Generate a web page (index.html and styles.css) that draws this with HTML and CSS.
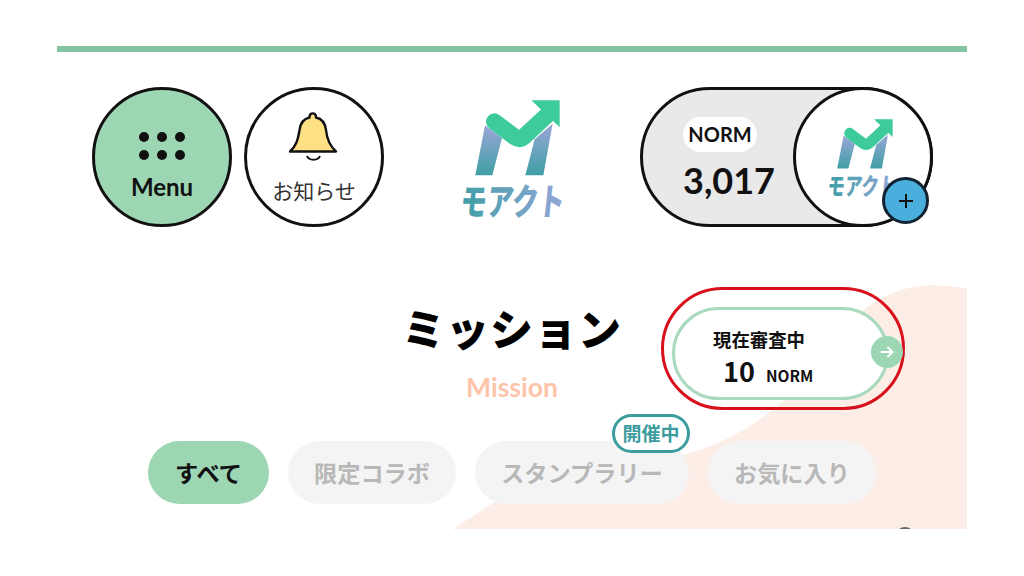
FILE: index.html
```html
<!DOCTYPE html>
<html lang="ja">
<head>
<meta charset="utf-8">
<title>ミッション</title>
<link rel="stylesheet" href="styles.css">
</head>
<body>
<svg class="defs" width="0" height="0" aria-hidden="true">
  <defs>
    <linearGradient id="legL" x1="0" y1="0" x2="0" y2="1">
      <stop offset="0" stop-color="#9aa6d6"/><stop offset="1" stop-color="#3f9fa6"/>
    </linearGradient>
    <linearGradient id="wordG" x1="0" y1="0" x2="1" y2="0">
      <stop offset="0" stop-color="#3f9fa6"/><stop offset="1" stop-color="#94a6d8"/>
    </linearGradient>
    <symbol id="logo" viewBox="0 0 420 450">
      <path d="M135 130 L186 168 L157 280 L106 280 Z" fill="url(#legL)"/>
      <path d="M338 125 L310 280 L256 280 L284 172 Z" fill="url(#legL)"/>
      <path d="M163 119 L224 165 Q238 175 252 164 L325 96" fill="none" stroke="#3ecb9c" stroke-width="50" stroke-linecap="round" stroke-linejoin="round"/>
      <path d="M274 55 L359 55 L359 136 Z" fill="#3ecb9c"/>
      <text class="logo-word" x="60" y="399" textLength="312" lengthAdjust="spacingAndGlyphs" fill="url(#wordG)" transform="translate(40 0) skewX(-6)">モアクト</text>
    </symbol>
  </defs>
</svg>
<main class="frame">
  <svg class="blob" viewBox="57 46 910 483" aria-hidden="true">
    <path d="M453 529 L493 503 C560 465 640 468 690 453 C740 438 790 405 820 360 C850 315 880 287 933 285 L967 288 V529 Z"/>
  </svg>
  <span class="peek"></span>
  <div class="topbar"></div>
  <header class="header">
    <button class="round menu">
      <span class="dots"><i></i><i></i><i></i><i></i><i></i><i></i></span>
      <span class="menu-label">Menu</span>
    </button>
    <button class="round notice">
      <svg class="bell" viewBox="0 0 54 54" aria-hidden="true">
        <path d="M3 41.5 C9 36 11 30 12.500 20 C13.500 12 18 8.500 22.500 7.500 C22 2 29.500 2 29 7.500 C34 8.500 38 12 39 20 C40 30 43 36 49 41.500 Z" fill="#fde184" stroke="#111" stroke-width="2.400" stroke-linejoin="round"/>
        <path d="M20 46 C22 51 31 51 33 46" fill="none" stroke="#111" stroke-width="2"/>
      </svg>
      <span class="notice-label">お知らせ</span>
    </button>
    <svg class="logo-main" aria-label="モアクト"><use href="#logo"/></svg>
    <div class="points">
      <div class="points-info">
        <span class="unit">NORM</span>
        <span class="balance">3,017</span>
      </div>
      <div class="points-circle">
        <svg class="logo-small" aria-hidden="true"><use href="#logo"/></svg>
      </div>
      <span class="plus">
        <svg viewBox="0 0 20 20" aria-hidden="true"><path d="M10 3 V17 M3 10 H17" stroke="#111" stroke-width="2" fill="none"/></svg>
      </span>
    </div>
  </header>
  <section class="heading">
    <h1 class="title">ミッション</h1>
    <p class="subtitle">Mission</p>
  </section>
  <div class="review-ring">
    <div class="review">
      <span class="review-label">現在審査中</span>
      <span class="review-count"><b>10</b><small>NORM</small></span>
      <span class="arrow">
        <svg viewBox="0 0 20 20" aria-hidden="true"><path d="M3 10 H16 M10.500 4.500 L16 10 L10.500 15.500" stroke="#fff" stroke-width="2.400" fill="none"/></svg>
      </span>
    </div>
  </div>
  <nav class="tabs">
    <a class="tab active">すべて</a>
    <a class="tab">限定コラボ</a>
    <a class="tab stamp">スタンプラリー<span class="badge">開催中</span></a>
    <a class="tab">お気に入り</a>
  </nav>
</main>
</body>
</html>
```
FILE: styles.css
```css
* { box-sizing: border-box; }
html, body { margin: 0; padding: 0; }
body {
  background: #fff;
  font-family: "Lato", "Noto Sans CJK JP", sans-serif;
  color: #111;
  width: 1024px;
  height: 576px;
  overflow: hidden;
  padding: 46px 57px 0;
}
.defs { position: absolute; }
.frame {
  position: relative;
  width: 910px;
  height: 483px;
  overflow: hidden;
}
.blob { position: absolute; inset: 0; width: 910px; height: 483px; }
.blob path { fill: #fdede7; }
.peek {
  position: absolute;
  left: 838px;
  top: 481px;
  width: 20px;
  height: 20px;
  border: 2px solid #666;
  border-radius: 50%;
}
.topbar { position: relative; height: 6px; background: #84c4a2; }
.header {
  position: relative;
  display: flex;
  align-items: center;
  height: 140px;
  margin-top: 35px;
  padding-left: 35px;
  gap: 12px;
}
.round {
  width: 140px;
  height: 140px;
  flex: none;
  border: 3px solid #111;
  border-radius: 50%;
  padding: 0;
  display: flex;
  flex-direction: column;
  align-items: center;
  font-family: inherit;
  color: inherit;
}
.menu { background: #9dd6b3; padding-top: 42px; }
.dots {
  display: grid;
  grid-template-columns: repeat(3, 10px);
  gap: 8px 8px;
}
.dots i { width: 10px; height: 10px; border-radius: 50%; background: #111; }
.menu-label { font-size: 24px; font-weight: 700; line-height: 30px; margin-top: 12px; }
.notice { background: #fff; padding-top: 20px; }
.bell { width: 54px; height: 54px; }
.notice-label { font-size: 21px; line-height: 28px; margin-top: 13px; color: #333; font-weight: 400; }
.logo-main { width: 140px; height: 150px; flex: none; margin: 0 0 0 44px; }
.points {
  position: relative;
  width: 293px;
  height: 140px;
  margin-left: 48px;
  flex: none;
  display: flex;
  justify-content: space-between;
  background: #e9e9e9;
  border: 3px solid #111;
  border-radius: 70px;
}
.points-info {
  display: flex;
  flex-direction: column;
  align-items: flex-start;
  padding: 27px 0 0 40px;
}
.unit {
  background: #fff;
  border-radius: 18px;
  width: 74px;
  height: 35px;
  font-size: 20px;
  font-weight: 700;
  line-height: 35px;
  text-align: center;
}
.balance { font-size: 36px; font-weight: 700; line-height: 44px; margin-top: 6px; }
.points-circle {
  width: 140px;
  height: 140px;
  margin: -3px;
  background: #fff;
  border: 3px solid #111;
  border-radius: 50%;
  display: flex;
  justify-content: center;
  padding: 17px 6px 0 0;
}
.logo-small { width: 92px; height: 99px; }
.plus {
  position: absolute;
  right: 1px;
  bottom: 0;
  width: 47px;
  height: 47px;
  border-radius: 50%;
  background: #4aafdc;
  border: 3px solid #123;
  display: flex;
  align-items: center;
  justify-content: center;
}
.plus svg { width: 20px; height: 20px; }
.logo-word { font-family: "Noto Sans CJK JP", sans-serif; font-weight: 900; font-size: 110px; }
.heading {
  position: relative;
  text-align: center;
  margin-top: 72px;
}
.title {
  margin: 0;
  font-size: 43px;
  line-height: 56px;
  font-weight: 900;
  font-family: "Noto Sans CJK JP", sans-serif;
  letter-spacing: 1px;
  color: #000;
}
.subtitle {
  margin: 17px 0 0;
  font-size: 26.500px;
  line-height: 30px;
  font-weight: 700;
  color: #fcc4aa;
}
.review-ring {
  position: absolute;
  left: 604px;
  top: 241px;
  width: 244px;
  height: 123px;
  border: 3px solid #d9101c;
  border-radius: 62px;
}
.review {
  position: absolute;
  left: 8px;
  top: 17px;
  width: 217px;
  height: 93px;
  background: #fff;
  border: 3px solid #a9d9be;
  border-radius: 47px;
  font-family: "Noto Sans CJK JP", sans-serif;
}
.review-label {
  position: absolute;
  left: 38px;
  top: 15px;
  font-size: 18.400px;
  font-weight: 700;
  line-height: 28px;
}
.review-count {
  position: absolute;
  left: 48px;
  top: 42px;
  display: flex;
  align-items: baseline;
  gap: 11px;
  line-height: 38px;
}
.review-count b { font-size: 27px; font-weight: 700; }
.review-count small { font-size: 15.500px; font-weight: 700; }
.arrow {
  position: absolute;
  right: -17px;
  top: 26px;
  width: 32px;
  height: 32px;
  border-radius: 50%;
  background: #9dd6b3;
  display: flex;
  align-items: center;
  justify-content: center;
}
.arrow svg { width: 18px; height: 18px; }
.tabs {
  position: absolute;
  left: 91px;
  top: 395px;
  display: flex;
  gap: 19px;
  font-family: "Noto Sans CJK JP", sans-serif;
}
.tab {
  position: relative;
  height: 63px;
  border-radius: 32px;
  background: #f4f4f4;
  color: #b8b8b8;
  font-size: 23.200px;
  font-weight: 700;
  line-height: 63px;
  text-align: center;
  padding: 0 26px;
}
.active { background: #9dd6b3; color: #111; padding: 0 27px; }
.stamp { width: 214px; padding: 0; }
.badge {
  position: absolute;
  left: 137px;
  top: -27px;
  width: 78px;
  height: 39px;
  background: #fff;
  border: 3px solid #3c9c9e;
  border-radius: 20px;
  color: #3c9c9e;
  font-size: 19px;
  line-height: 32px;
}
```
